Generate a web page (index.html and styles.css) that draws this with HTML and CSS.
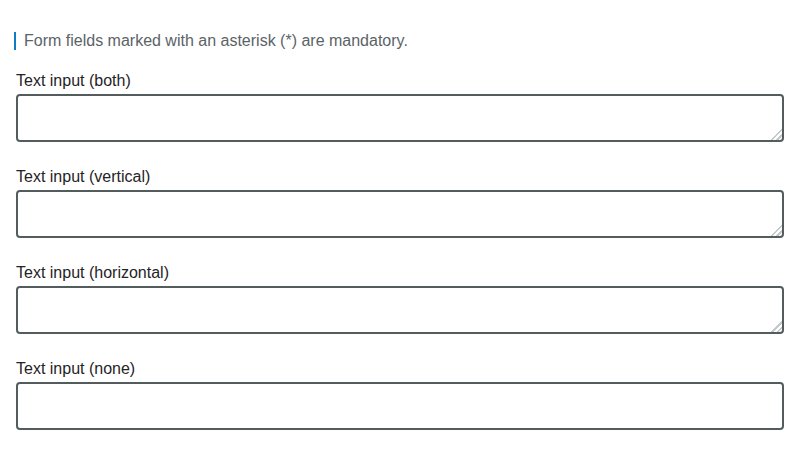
FILE: index.html
```html
<!DOCTYPE html>
<html>
<head>
<meta charset="utf-8">
<link rel="stylesheet" href="styles.css">
</head>
<body>
<form class="form">
  <p class="note">Form fields marked with an asterisk (*) are mandatory.</p>
  <div class="field">
    <label class="label" for="t1">Text input (both)</label>
    <textarea id="t1" class="input resize-both"></textarea>
  </div>
  <div class="field">
    <label class="label" for="t2">Text input (vertical)</label>
    <textarea id="t2" class="input resize-vertical"></textarea>
  </div>
  <div class="field">
    <label class="label" for="t3">Text input (horizontal)</label>
    <textarea id="t3" class="input resize-horizontal"></textarea>
  </div>
  <div class="field">
    <label class="label" for="t4">Text input (none)</label>
    <textarea id="t4" class="input resize-none"></textarea>
  </div>
</form>
</body>
</html>
```

FILE: styles.css
```css
html, body {
  margin: 0;
  padding: 0;
  background: #ffffff;
}
body {
  font-family: "Liberation Sans", Arial, sans-serif;
  font-size: 16px;
  color: #1f2426;
}
.form {
  padding: 32px 16px 0 16px;
  display: flex;
  flex-direction: column;
  gap: 25px;
}
.note {
  margin: 0 0 -4px -2px;
  padding-left: 8px;
  border-left: 2px solid #0f7bc4;
  color: #5b6367;
  line-height: 18px;
}
.field {
  display: flex;
  flex-direction: column;
  gap: 3px;
}
.label {
  line-height: 20px;
  color: #1f2426;
}
.input {
  box-sizing: border-box;
  width: 100%;
  height: 48px;
  margin: 0;
  border: 2px solid #545d5e;
  border-radius: 4px;
  padding: 8px;
  font: inherit;
  background: #fff;
}
.input::-webkit-resizer {
  background: linear-gradient(135deg, transparent 0 62%, #c4c8c8 62% 70%, transparent 70% 80%, #c4c8c8 80% 88%, transparent 88%);
}
.resize-both { resize: both; }
.resize-vertical { resize: vertical; }
.resize-horizontal { resize: horizontal; }
.resize-none { resize: none; }
```
